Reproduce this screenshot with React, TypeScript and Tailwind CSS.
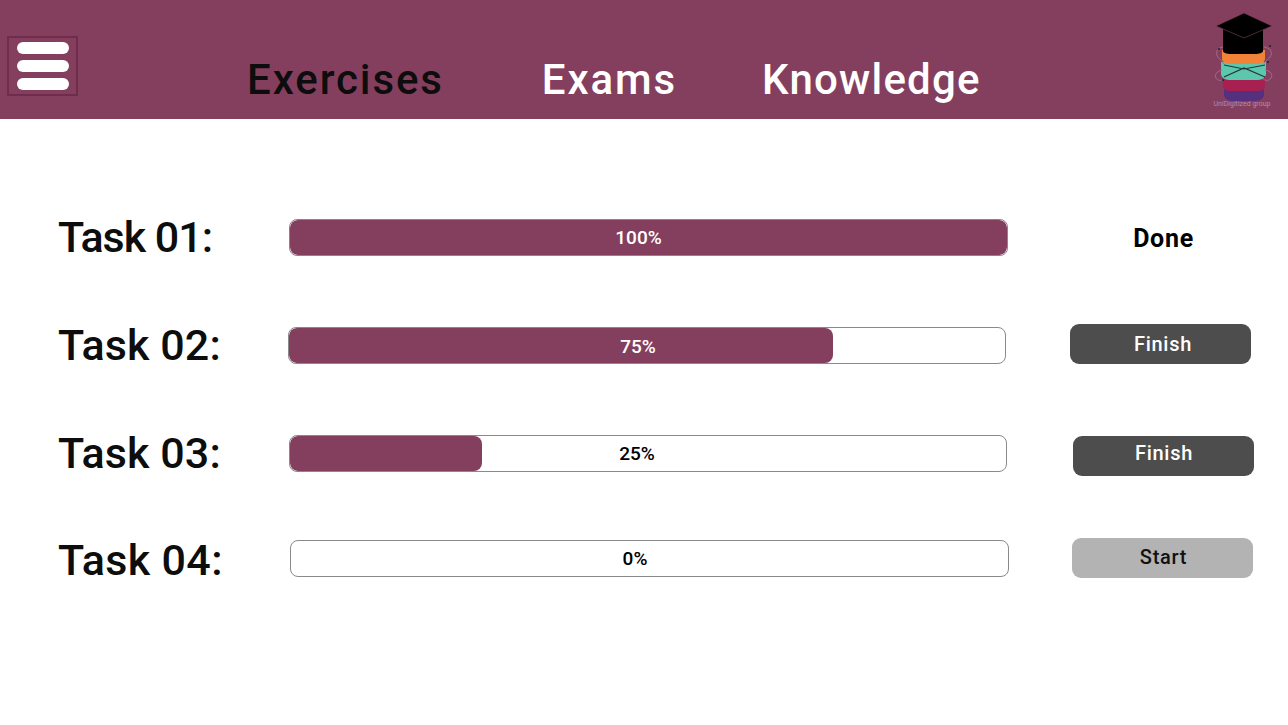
const tasks = [
  {
    name: 'Task 01:', labelClass: 'tracking-[-1px]', pct: 100, fill: 'w-full', rowClass: 'mt-[98px]',
    barClass: 'mt-[2px] w-[719px] border-[#a27a8d]', textClass: 'text-white pr-[20px] pt-[1px]',
    action: 'Done', actionClass: 'ml-[65px] mt-[2px] bg-transparent text-black text-[25px] font-bold',
  },
  {
    name: 'Task 02:', labelClass: 'tracking-[0.1px]', pct: 75, fill: 'w-[544px]', rowClass: 'mt-[68px]',
    barClass: '-ml-px mt-[2px] w-[718px] border-[#8a8a8a]', textClass: 'text-white pr-[18px] pt-[3px]',
    action: 'Finish', actionClass: 'ml-[64px] -mt-px bg-[#4d4d4d] text-white text-[20px] font-medium pl-[5px]',
  },
  {
    name: 'Task 03:', labelClass: 'tracking-[0.1px]', pct: 25, fill: 'w-[192px]', rowClass: 'mt-[68px]',
    barClass: 'mt-[2px] w-[718px] border-[#8a8a8a]', textClass: 'text-black pr-[22px] pt-[2px]',
    action: 'Finish', actionClass: 'ml-[66px] mt-[3px] bg-[#4d4d4d] text-white text-[20px] font-medium pl-[1px] pb-[6px]',
  },
  {
    name: 'Task 04:', labelClass: 'tracking-[0.35px]', pct: 0, fill: 'w-0', rowClass: 'mt-[67px]',
    barClass: 'ml-px w-[719px] border-[#8a8a8a]', textClass: 'text-black pr-[29px] pt-[1px]',
    action: 'Start', actionClass: 'ml-[63px] -mt-[2px] bg-[#b3b3b3] text-[#111] text-[20px] font-medium pl-[2px] pb-[2px]',
  },
];

function Logo() {
  return (
    <svg width="70" height="110" viewBox="0 0 70 110" className="shrink-0">
      <path d="M14 86h40v9c0 3-4 6-8 6H22c-4 0-8-3-8-6z" fill="#55307f" />
      <path d="M13 76h42v11c0 2-4 4-8 4H21c-4 0-8-2-8-4z" fill="#a81f52" />
      <path d="M11 62h45v12c0 3-4 6-8 6H19c-4 0-8-3-8-6z" fill="#5cc7ad" />
      <path d="M12 50h43v9c0 3-4 5-8 5H20c-4 0-8-2-8-5z" fill="#f08338" />
      <path d="M14 77l20-9 21 9M14 65l20 4 21-4" fill="none" stroke="#24353a" strokeWidth="1.2" />
      <path d="M13 28h40v23c0 2-4 3-8 3H21c-4 0-8-1-8-3z" fill="#000" />
      <path d="M34 13l28 13-28 12L6 26z" fill="#000" stroke="#843f5f" strokeWidth="0.6" />
      <g fill="none" stroke="#a56c8a" strokeWidth="1">
        <path d="M13 47c-6 1-8 6-5 10s6 5 5 7" />
        <path d="M54 47c7 1 9 6 6 10s-6 5-6 7" />
        <path d="M12 70c-5 1-8 5-6 8s5 3 8 1" />
        <path d="M55 70c6 1 8 5 6 8s-5 3-8 1" />
      </g>
      <g fill="#1f1f2b">
        <circle cx="9" cy="49" r="1" />
        <circle cx="60" cy="46" r="1" />
        <circle cx="13" cy="80" r="1" />
        <circle cx="58" cy="62" r="1" />
      </g>
      <text x="32" y="106" textAnchor="middle" fontSize="7" fill="#b98aa3" fontFamily="Roboto, sans-serif">UniDigitized group</text>
    </svg>
  );
}

export default function App() {
  return (
    <div className="min-h-[725px] bg-white font-['Roboto','Liberation_Sans',sans-serif]">
      <header className="h-[119px] bg-[#843f5f] flex items-start">
        <button className="mt-9 ml-[7px] w-[71px] h-[60px] border-2 border-[#6f2c4b] flex flex-col items-center justify-center gap-[6px]">
          <span className="block w-[52px] h-[12px] rounded-full bg-white" />
          <span className="block w-[52px] h-[12px] rounded-full bg-white" />
          <span className="block w-[52px] h-[12px] rounded-full bg-white" />
        </button>
        <nav className="flex text-[42px] leading-[50px] font-medium mt-[55px]">
          <span className="ml-[169px] tracking-[1.9px] text-[#0d0d0d]">Exercises</span>
          <span className="ml-[98px] tracking-[1.9px] text-white">Exams</span>
          <span className="ml-[85px] tracking-[1.2px] text-white">Knowledge</span>
        </nav>
        <div className="ml-auto mr-[8px]">
          <Logo />
        </div>
      </header>
      <main className="flex flex-col pl-[58px]">
        {tasks.map((t) => (
          <div key={t.name} className={`flex items-start h-10 ${t.rowClass}`}>
            <div className={`w-[231px] shrink-0 whitespace-nowrap text-[43px] leading-[40px] font-medium text-[#0d0d0d] ${t.labelClass}`}>{t.name}</div>
            <div className={`relative h-[37px] shrink-0 rounded-lg border bg-white overflow-hidden ${t.barClass}`}>
              <div className={`h-full bg-[#843f5f] rounded-lg ${t.fill}`} />
              <span className={`absolute inset-0 flex items-center justify-center text-[19px] font-medium ${t.textClass}`}>{t.pct}%</span>
            </div>
            <div className={`w-[181px] h-10 shrink-0 rounded-[9px] flex items-center justify-center tracking-[0.7px] ${t.actionClass}`}>{t.action}</div>
          </div>
        ))}
      </main>
    </div>
  );
}
